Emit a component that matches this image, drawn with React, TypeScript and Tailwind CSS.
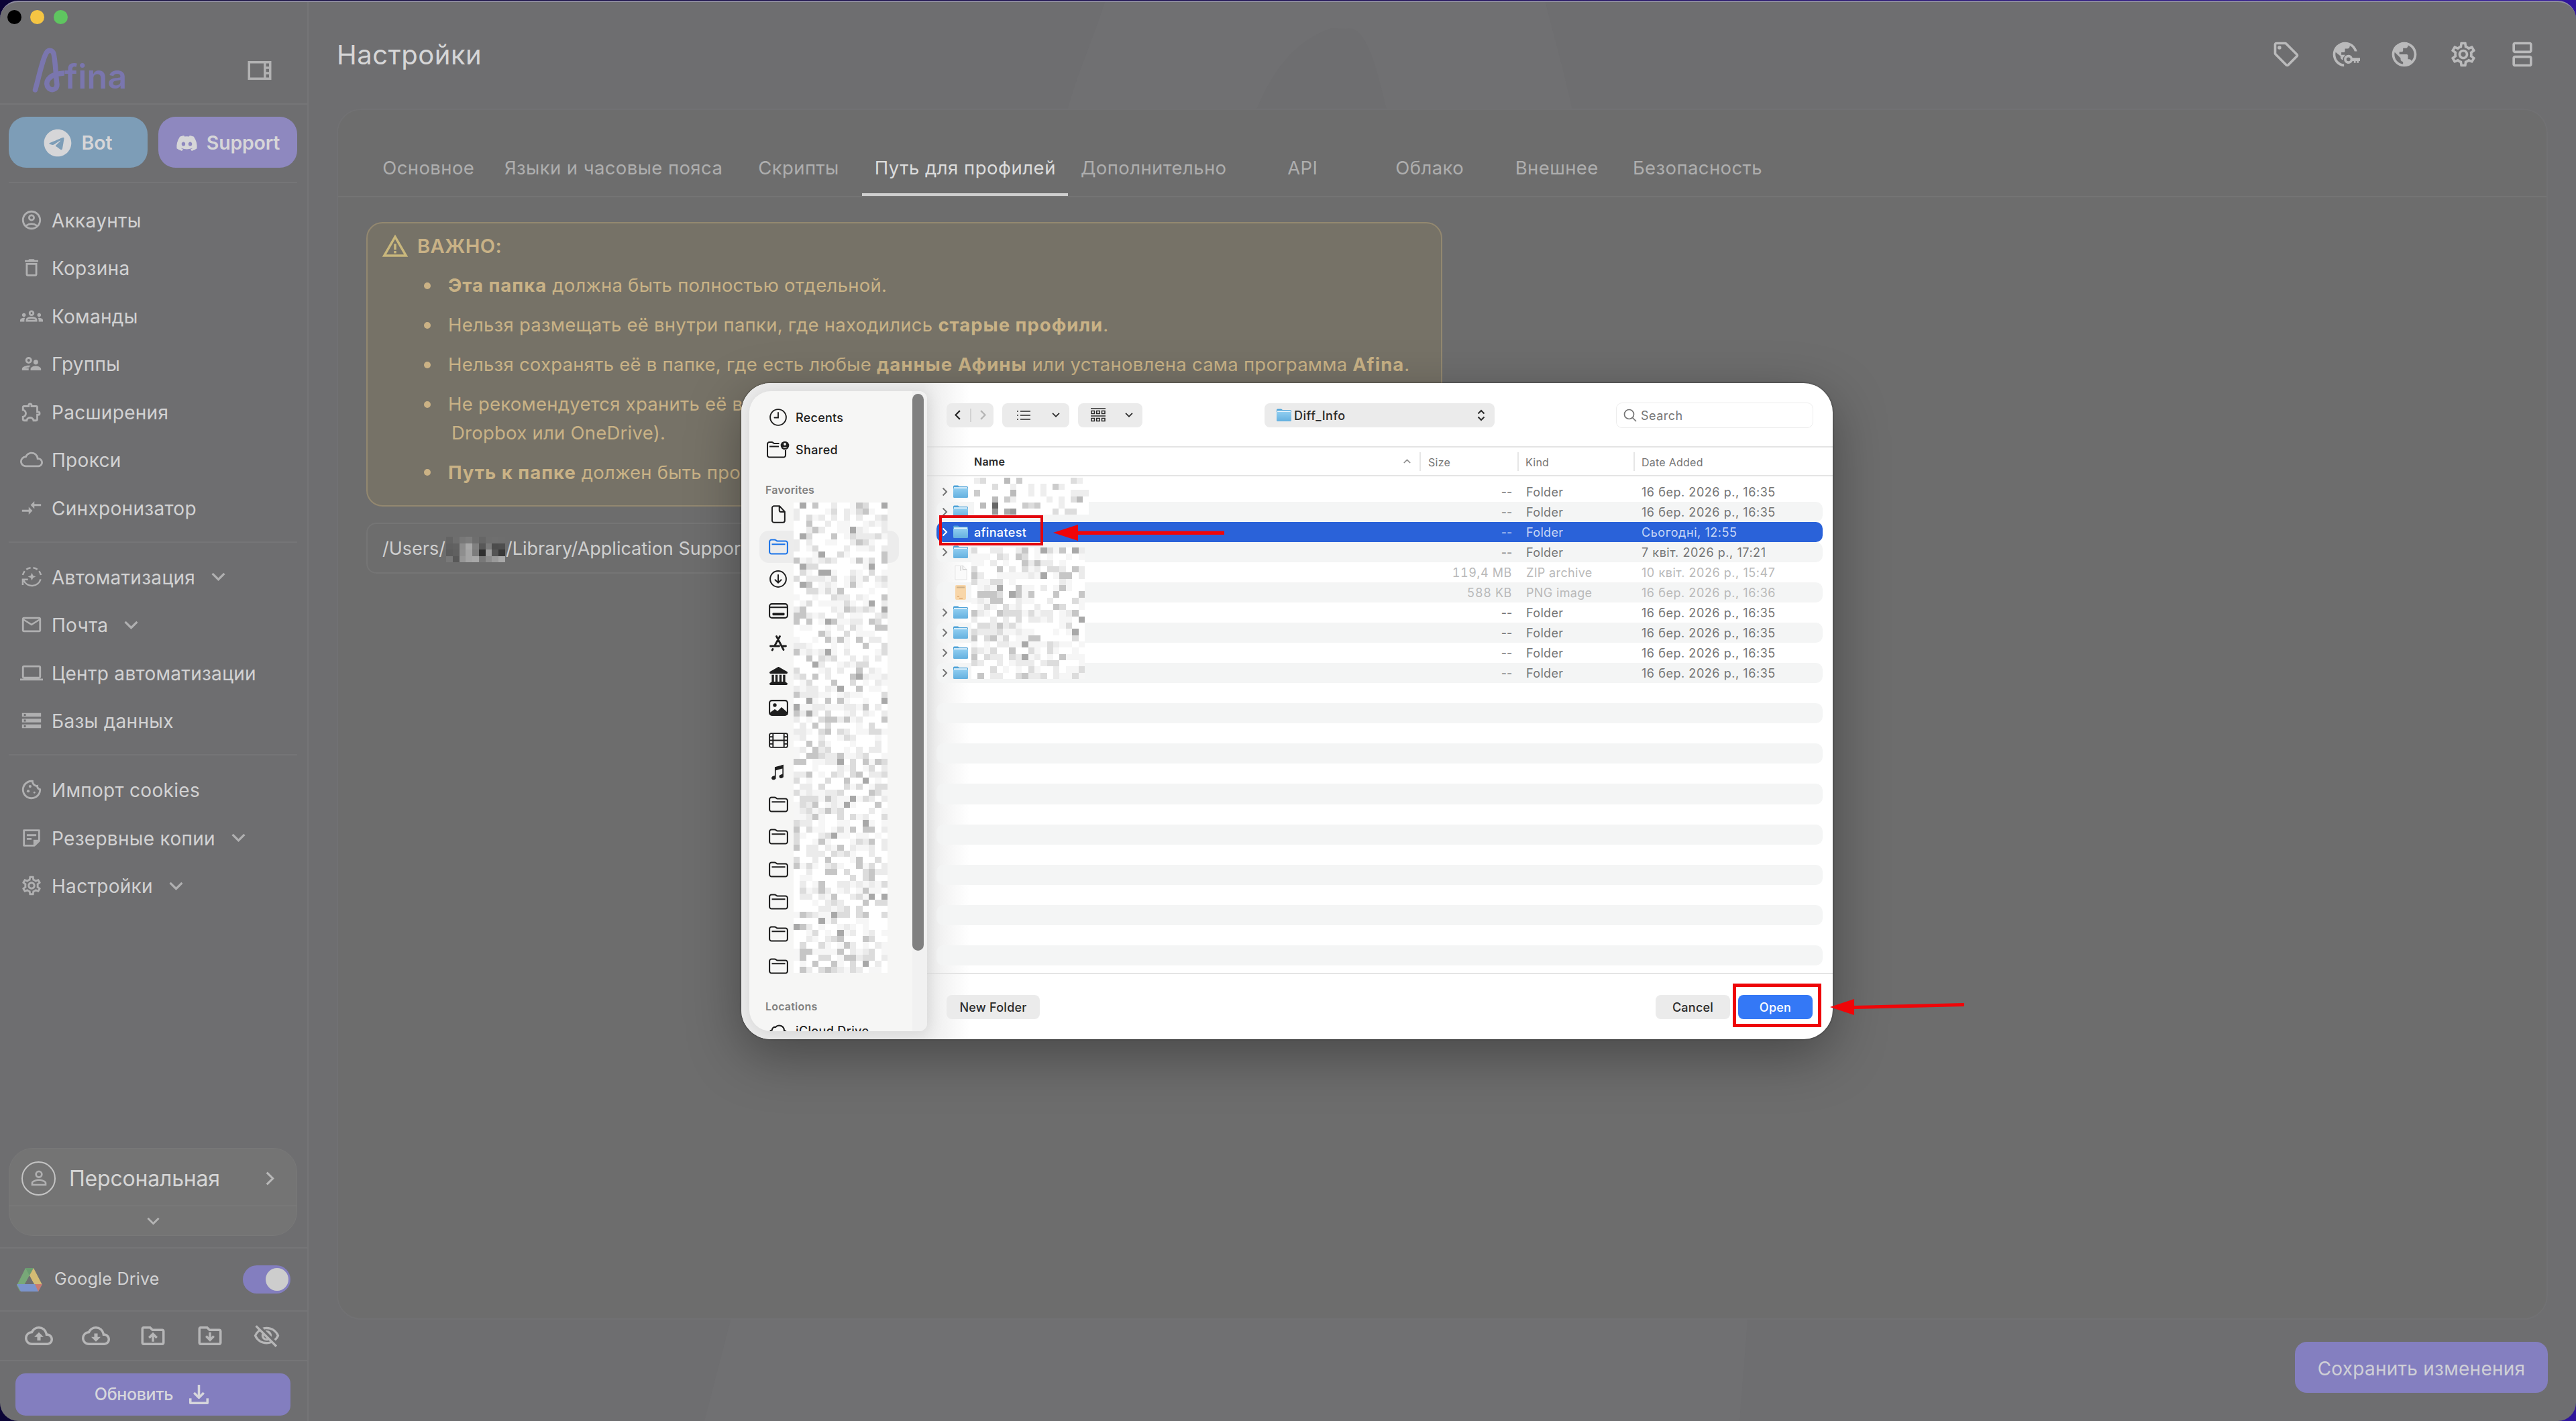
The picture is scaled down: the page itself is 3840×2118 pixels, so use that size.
import type { ReactNode } from 'react';
import type { IconType } from 'react-icons';
import {
  MdOutlineAccountCircle, MdDeleteOutline, MdOutlineGroups, MdOutlineSupervisorAccount, MdOutlineExtension,
  MdOutlineCloudQueue, MdOutlineCompareArrows, MdMailOutline, MdOutlineLaptop, MdStorage, MdOutlineCookie,
  MdOutlineSettings, MdOutlineViewSidebar, MdOutlineSell, MdPublic, MdOutlineSplitscreen, MdOutlineCloudUpload,
  MdOutlineCloudDownload, MdOutlineDriveFolderUpload, MdOutlineVisibilityOff, MdWarningAmber, MdPersonOutline,
} from 'react-icons/md';
import { FaTelegram, FaDiscord, FaLandmark } from 'react-icons/fa6';
import { IoMusicalNotesSharp } from 'react-icons/io5';

type SvgProps = { className?: string };

const Chevron = ({ className = '' }: SvgProps) => (
  <svg viewBox="0 0 20 12" className={className} fill="none" stroke="currentColor" strokeWidth="3">
    <path d="M1.5 1.5 10 10l8.500-8.500" />
  </svg>
);

const AutomationIcon = ({ className = '' }: SvgProps) => (
  <svg viewBox="0 0 32 32" className={className} fill="none" stroke="currentColor" strokeWidth="2.600">
    <path d="M2 13.500A14 14 0 0 1 5 7.500M7.500 5A14 14 0 0 1 14 2.200M18 2.200A14 14 0 0 1 24.500 5M27 7.500A14 14 0 0 1 30 13.500" />
    <path d="M29.500 20A14 14 0 0 1 3.500 22M2 29v-8.500h8" />
    <path d="M16 10l1.800 4.200L22 16l-4.200 1.800L16 22l-1.800-4.200L10 16l4.200-1.800z" fill="currentColor" stroke="none" />
  </svg>
);

const BackupIcon = ({ className = '' }: SvgProps) => (
  <svg viewBox="0 0 24 24" className={className} fill="none" stroke="currentColor" strokeWidth="2">
    <path d="M4 4h16v11l-5 5H4z" strokeLinejoin="round" />
    <path d="M7 9h10M7 13h5" />
    <path d="M14 20v-6h6z" fill="currentColor" stroke="none" />
  </svg>
);

const GlobeKeyIcon = ({ className = '' }: SvgProps) => (
  <svg viewBox="0 0 24 24" className={className} fill="currentColor">
    <path d="M11 22C5.900 21.500 2 17.200 2 12 2 6.480 6.480 2 12 2c4.600 0 8.500 3.100 9.650 7.500h-2.100C18.900 7.500 17.500 5.800 15.700 4.900c0 1.600-.7 2.500-1.900 2.500h-2v2c0 .55-.45 1-1 1h-2v2h3.200l-1.800 2.500v1.600c-1.100 0-2-.9-2-2v-1L4.210 10.210C4.080 10.790 4 11.380 4 12c0 4.080 3 7.440 7 7.930z" />
    <path d="M14.600 12.400a3.600 3.600 0 1 0 3.300 5h1.100v1.600h1.500v-1.600h.9v1.600h1.500v-1.600h1.100v-2.600h-6.100a3.600 3.600 0 0 0-3.300-2.400zm0 2a1.600 1.600 0 1 1 0 3.200 1.600 1.600 0 0 1 0-3.200z" />
  </svg>
);

const FolderDownIcon = ({ className = '' }: SvgProps) => (
  <svg viewBox="0 0 24 24" className={className} fill="currentColor">
    <path d="M20 6h-8l-2-2H4c-1.100 0-1.990.9-1.990 2L2 18c0 1.100.9 2 2 2h16c1.100 0 2-.9 2-2V8c0-1.100-.9-2-2-2zm0 12H4V6h5.170l2 2H20v10zM11 9v4.180l-1.590-1.590L8 13l4 4 4-4-1.410-1.410L13 13.180V9z" />
  </svg>
);

const navGroups: { icon: IconType | typeof AutomationIcon; label: string; more?: boolean; size?: string }[][] = [
  [
    { icon: MdOutlineAccountCircle, label: 'Аккаунты' },
    { icon: MdDeleteOutline, label: 'Корзина' },
    { icon: MdOutlineGroups, label: 'Команды' },
    { icon: MdOutlineSupervisorAccount, label: 'Группы' },
    { icon: MdOutlineExtension, label: 'Расширения' },
    { icon: MdOutlineCloudQueue, label: 'Прокси' },
    { icon: MdOutlineCompareArrows, label: 'Синхронизатор' },
  ],
  [
    { icon: AutomationIcon, label: 'Автоматизация', more: true, size: 'size-[31px]' },
    { icon: MdMailOutline, label: 'Почта', more: true },
    { icon: MdOutlineLaptop, label: 'Центр автоматизации' },
    { icon: MdStorage, label: 'Базы данных' },
  ],
  [
    { icon: MdOutlineCookie, label: 'Импорт cookies' },
    { icon: BackupIcon, label: 'Резервные копии', more: true },
    { icon: MdOutlineSettings, label: 'Настройки', more: true },
  ],
];

const tabs = ['Основное', 'Языки и часовые пояса', 'Скрипты', 'Путь для профилей', 'Дополнительно', 'API', 'Облако', 'Внешнее', 'Безопасность'];

const files = [
  { icon: 'folder', size: '--', kind: 'Folder', date: '16 бер. 2026 р., 16:35' },
  { icon: 'folder', size: '--', kind: 'Folder', date: '16 бер. 2026 р., 16:35' },
  { icon: 'folder', name: 'afinatest', size: '--', kind: 'Folder', date: 'Сьогодні, 12:55' },
  { icon: 'folder', size: '--', kind: 'Folder', date: '7 квіт. 2026 р., 17:21' },
  { icon: 'zip', size: '119,4 MB', kind: 'ZIP archive', date: '10 квіт. 2026 р., 15:47' },
  { icon: 'png', size: '588 KB', kind: 'PNG image', date: '16 бер. 2026 р., 16:36' },
  { icon: 'folder', size: '--', kind: 'Folder', date: '16 бер. 2026 р., 16:35' },
  { icon: 'folder', size: '--', kind: 'Folder', date: '16 бер. 2026 р., 16:35' },
  { icon: 'folder', size: '--', kind: 'Folder', date: '16 бер. 2026 р., 16:35' },
  { icon: 'folder', size: '--', kind: 'Folder', date: '16 бер. 2026 р., 16:35' },
];

const topNameCells = ['edfffbfcffffffffdef', 'fffdffeffefefceffff', 'cfffffbffefeffffeee', 'fffbfcefffffefefdbf', 'fbf6ffffcdcfffeffff', 'fff9fa9ffffffdfddff'];
const pathCells = ['#646464', '#6e6e6e', '#787878', '#7c7c7c', '#6e6e6e', '#666666', '#6e6e6e', '#6f6f6f', '#6e6e6e',
  '#606060', '#626262', '#8c8c8c', '#a8a8a8', '#808080', '#585858', '#7a7a7a', '#4c4c4c', '#4e4e4e',
  '#5c5c5c', '#606060', '#8e8e8e', '#a4a4a4', '#7c7c7c', '#303030', '#9c9c9c', '#545454', '#383838',
  '#787878', '#585858', '#969696', '#a4a4a4', '#a8a8a8', '#787878', '#8c8c8c', '#9a9a9a', '#a8a8a8'];

// stable pseudo-random greys so hidden names always blur the same way
const noise = (count: number, seed: number) => {
  let s = seed;
  return Array.from({ length: count }, () => {
    s = (s * 1103515245 + 12345) % 2147483648;
    const r = s / 2147483648;
    const v = r < 0.42 ? 255 : r < 0.62 ? 246 : r < 0.78 ? 235 : r < 0.9 ? 220 : r < 0.97 ? 198 : 168;
    return `rgb(${v},${v},${v})`;
  });
};

const sidebarNoise = noise(15 * 77, 41);
const listNoise = noise(18 * 21, 97);
const topNoise = topNameCells.join('').split('').map((c) => `#${c}${c}${c}`);

function Mosaic({ cells, cols, className }: { cells: string[]; cols: number; className: string }) {
  return (
    <svg className={className} viewBox={`0 0 ${cols} ${cells.length / cols}`} preserveAspectRatio="none" shapeRendering="crispEdges">
      {cells.map((fill, i) => <rect key={i} x={i % cols} y={Math.floor(i / cols)} width="1" height="1" fill={fill} />)}
    </svg>
  );
}

function Logo() {
  return (
    <div className="flex items-end h-[68px] text-[#7a76ae]">
      <svg viewBox="0 0 48 68" className="w-[48px] h-[68px]" fill="none" stroke="currentColor" strokeWidth="7.500" strokeLinecap="round" strokeLinejoin="round">
        <path d="M4.500 63C10 44 15 18 21 8c3-5 9-5 11 1 3 14 3 32 5 46 0 6-5 9-10 7-6-3-7-11-2-16 5-6 13-7 22-8" />
      </svg>
      <span className="text-[50px] leading-[50px] font-semibold tracking-[0.4px]">fina</span>
    </div>
  );
}

function Sidebar() {
  return (
    <aside className="w-[460px] shrink-0 h-full flex flex-col border-r-2 border-[#757577]">
      <div className="h-[156px] border-b-2 border-[#757577] shrink-0">
        <div className="flex gap-[13.5px] pl-[10.5px] pt-[14.5px]">
          <span className="size-[21px] rounded-full bg-black" />
          <span className="size-[21px] rounded-full bg-[#f5c543]" />
          <span className="size-[21px] rounded-full bg-[#5fc560]" />
        </div>
        <div className="flex justify-between items-center pl-[48px] pr-[50px] pt-[35px]">
          <Logo />
          <MdOutlineViewSidebar className="size-[42px] text-[#b2b2b3]" />
        </div>
      </div>

      <div className="flex gap-4 px-[13px] pt-[18px] pb-[21px] text-[#d6d6d8] text-[28.5px] font-semibold">
        <button className="w-[207px] h-[76px] pt-[2px] rounded-[26px] bg-[#7d9db7] flex items-center justify-center gap-[14px]">
          <FaTelegram className="size-[42px]" />Bot
        </button>
        <button className="w-[207px] h-[76px] pt-[2px] rounded-[26px] bg-[#8e88bf] flex items-center justify-center gap-[13px] tracking-[-0.2px]">
          <FaDiscord className="size-[33px]" />Support
        </button>
      </div>

      <nav className="pl-[13px] pr-[15px]">
        {navGroups.map((group, g) => (
          <div key={g} className={`border-t-2 border-[#757577] ${g === 0 ? 'pt-[19px] pb-[14px]' : 'pt-[15.5px] pb-[14px]'}`}>
            {group.map(({ icon: Icon, label, more, size }) => (
              <div key={label} className="h-[71.5px] flex items-center pl-[17px] text-[#d2d2d3]">
                <span className="w-[34px] flex justify-center text-[#b0b0b1]"><Icon className={size ?? 'size-[34px]'} /></span>
                <span className="ml-[13px] mt-[2px] text-[28px] tracking-[0.3px] whitespace-nowrap">{label}</span>
                {more && <Chevron className="w-[21px] h-[13px] ml-[24px] text-[#b0b0b1]" />}
              </div>
            ))}
          </div>
        ))}
      </nav>

      <div className="mt-auto">
        <div className="ml-[13px] mr-[15px] h-[131px] rounded-[36px] bg-[#747474] border border-[#797979] overflow-hidden">
          <div className="h-[86px] flex items-center pl-[18px] pr-[29px] pt-[4px] border-b-2 border-[#787878]">
            <span className="size-[51px] rounded-full border-2 border-[#c4c4c4] flex items-center justify-center text-[#b0b0b1]"><MdPersonOutline className="size-[34px]" /></span>
            <span className="ml-[20px] mt-[2px] text-[32px] tracking-[-0.2px] text-[#d6d6d6]">Персональная</span>
            <Chevron className="w-[21px] h-[13px] ml-auto -rotate-90 text-[#b8b8b8]" />
          </div>
          <div className="h-[43px] flex items-center justify-center text-[#b4b4b4]"><Chevron className="w-[19px] h-[12px]" /></div>
        </div>

        <div className="mt-[17px] h-[94px] border-t-2 border-[#757577] flex items-center pl-[25px] pr-[25px]">
          <svg viewBox="0 0 38 35" className="w-[38px] h-[35px]">
            <path d="M13 0h12l-6 11-11 20-3 4-5-9z" fill="#78a878" />
            <path d="M13 0h12l-6 11z" fill="#6a9c70" />
            <path d="M25 0l13 25H26L19 11z" fill="#d4bb74" />
            <path d="M0 24h38l-6 11H6z" fill="#7b94cc" />
            <path d="M38 24H27l5 11z" fill="#c97b70" />
            <path d="M19 12l7 12H12z" fill="#6e6e70" />
          </svg>
          <span className="ml-[18px] text-[25px] tracking-[0.25px] text-[#d2d2d3]">Google Drive</span>
          <span className="ml-auto w-[71px] h-[42px] rounded-full bg-[#837ebf] flex items-center justify-end pr-[3px]"><i className="size-[34px] rounded-full bg-[#cdcdcd]" /></span>
        </div>

        <div className="h-[76px] border-y-2 border-[#757577] flex items-center justify-between pl-[37px] pr-[40px] text-[#b6b6b7]">
          <MdOutlineCloudUpload className="size-[42px]" />
          <MdOutlineCloudDownload className="size-[42px]" />
          <MdOutlineDriveFolderUpload className="size-[42px]" />
          <FolderDownIcon className="size-[42px]" />
          <MdOutlineVisibilityOff className="size-[41px]" />
        </div>

        <button className="mt-[18px] mb-[8px] mx-[23px] w-[410px] h-[63px] rounded-[15px] bg-[#837ebf] flex items-center justify-center gap-[24px] text-[25px] tracking-[-0.35px] font-medium text-[#d6d6dc] pr-[4px]">
          Обновить
          <svg viewBox="0 0 28 28" className="size-[29px]" fill="none" stroke="currentColor" strokeWidth="3.400" strokeLinejoin="round">
            <path d="M14 0v18M7 11.500l7 7 7-7M1.700 19.500v6.800h24.600v-6.800" />
          </svg>
        </button>
      </div>
    </aside>
  );
}

function Bullet({ children, className = 'h-[59px]' }: { children: ReactNode; className?: string }) {
  return (
    <li className={`flex items-center ${className}`}>
      <i className="size-[10px] rounded-full bg-[#cbb285] ml-[84px] mr-[26px] shrink-0" />
      <span className="mt-px">{children}</span>
    </li>
  );
}

const Strong = ({ children }: { children: ReactNode }) => <b className="tracking-[1px]">{children}</b>;

function SettingsPage() {
  return (
    <main className="flex-1 flex flex-col pl-[42px] pr-[42px]">
      <header className="h-[162px] flex items-start justify-between shrink-0">
        <h1 className="text-[40px] tracking-[0.5px] leading-[48px] mt-[58px] text-[#d6d6d7]">Настройки</h1>
        <div className="flex items-center mt-[59px] gap-[44px] pr-[16px] text-[#bababb]">
          <MdOutlineSell className="size-[44px]" />
          <GlobeKeyIcon className="size-[44px]" />
          <MdPublic className="size-[44px]" />
          <MdOutlineSettings className="size-[44px]" />
          <MdOutlineSplitscreen className="size-[44px]" />
        </div>
      </header>

      <section className="h-[1805px] rounded-[36px] border-2 border-[#717173] bg-[#6d6d6d] shrink-0">
        <div className="flex h-[130px] items-end border-b-2 border-[#747474] pl-[40px]">
          {tabs.map((tab) => {
            const active = tab === 'Путь для профилей';
            return (
              <button key={tab} className={`min-w-[189.5px] px-[18.5px] h-[86px] pt-[7px] text-[27.5px] whitespace-nowrap border-b-4 ${active ? 'text-[#dcdcdc] border-[#d0d0d0] tracking-[0.5px]' : 'text-[#aeaeae] border-transparent tracking-[0.4px]'}`}>{tab}</button>
            );
          })}
        </div>

        <div className="ml-[42px] mt-[37px] w-[1604px] h-[424px] rounded-[24px] border-2 border-[#938870] bg-[#767267] text-[#c9b286] text-[27.5px] tracking-[0.24px]">
          <div className="flex items-center h-[67px] pl-[20px] gap-[12px]">
            <MdWarningAmber className="size-[42px] text-[#c9b77c]" />
            <b className="font-semibold text-[29px] tracking-[0.5px] mt-[1px]">ВАЖНО:</b>
          </div>
          <ul className="-mt-[4px] whitespace-nowrap">
            <Bullet><Strong>Эта папка</Strong> должна быть полностью отдельной.</Bullet>
            <Bullet>Нельзя размещать её внутри папки, где находились <Strong>старые профили</Strong>.</Bullet>
            <Bullet>Нельзя сохранять её в папке, где есть любые <Strong>данные Афины</Strong> или установлена сама программа <Strong>Afina</Strong>.</Bullet>
            <Bullet>Не рекомендуется хранить её в</Bullet>
            <li className="h-[43px] -mt-[8px] ml-[125px] flex items-center">Dropbox или OneDrive).</li>
            <Bullet className="h-[74px]"><Strong>Путь к папке</Strong> должен быть про</Bullet>
          </ul>
        </div>

        <div className="ml-[42px] mt-[24px] w-[1604px] h-[76px] pt-[3px] rounded-[15px] border-2 border-[#757575] flex items-center pl-[22px] text-[27px] text-[#cfcfcf]">
          /Users/
          <Mosaic cells={pathCells} cols={9} className="w-[88px] h-[38px] mx-[1px]" />
          /Library/Application Suppor
        </div>
      </section>

      <button className="mt-[33px] self-end w-[377px] h-[76px] pt-[3px] rounded-[18px] bg-[#847fc0] text-[#cfcfd6] text-[28px] tracking-[0.25px]">Сохранить изменения</button>
    </main>
  );
}

/* ---------- macOS open dialog ---------- */

const FolderLine = ({ className = '' }: SvgProps) => (
  <svg viewBox="0 0 29 24" className={className} fill="none" stroke="currentColor" strokeWidth="2.100" strokeLinejoin="round">
    <path d="M1.100 19.500v-15a3 3 0 0 1 3-3h4.400c2.500 0 2.500 2 4.500 2h11.900a3 3 0 0 1 3 3v13a3 3 0 0 1-3 3H4.100a3 3 0 0 1-3-3zM4.500 8.200h20" />
  </svg>
);

const favorites: ReactNode[] = [
  <svg viewBox="0 0 22 28" className="w-[21px] h-[27px]" fill="none" stroke="currentColor" strokeWidth="2.100" strokeLinejoin="round"><path d="M4 1.200h8.500L20.800 10v13.800a3 3 0 0 1-3 3H4a3 3 0 0 1-3-3V4.200a3 3 0 0 1 3-3zM12.300 1.500v6.500a2.200 2.200 0 0 0 2.200 2.200h6" /></svg>,
  <FolderLine className="w-[29px] h-[24px] text-[#1c74e8]" />,
  <svg viewBox="0 0 26 26" className="size-[26px]" fill="none" stroke="currentColor" strokeWidth="2" strokeLinecap="round"><circle cx="13" cy="13" r="11.900" /><path d="M13 7v11.500M8.500 14.200l4.500 4.500 4.500-4.500" /></svg>,
  <svg viewBox="0 0 29 23" className="w-[29px] h-[23px]" fill="none" stroke="currentColor" strokeWidth="2.100"><rect x="1.100" y="1.100" width="26.800" height="20.800" rx="3.500" /><path d="M1 6.200h27" /><rect x="5.500" y="14.500" width="18" height="3.800" rx="1" fill="currentColor" stroke="none" /></svg>,
  <svg viewBox="0 0 26 24" className="w-[26px] h-[24px]" fill="none" stroke="currentColor" strokeWidth="2.800" strokeLinecap="round"><path d="M10.500 1.500l10.500 20M15.500 1.500L7.500 16M1.500 16h13M20 16h4.500M5 20.500l-.8 1.500" /></svg>,
  <FaLandmark className="size-[27px]" />,
  <svg viewBox="0 0 29 24" className="w-[29px] h-[24px]" fill="none" stroke="currentColor" strokeWidth="2.100"><rect x="1.100" y="1.100" width="26.800" height="21.800" rx="3.500" /><circle cx="9" cy="8" r="2.700" fill="currentColor" stroke="none" /><path d="M2 19l7-5 4 3 6-6 9 8v4H2z" fill="currentColor" stroke="none" /></svg>,
  <svg viewBox="0 0 29 23" className="w-[29px] h-[23px]" fill="none" stroke="currentColor" strokeWidth="1.900"><rect x="1.100" y="1.100" width="26.800" height="20.800" rx="2.500" /><path d="M6.300 1v21M22.700 1v21M6.300 11.500h16.400M1 6.200h5.300M1 11.500h5.300M1 16.700h5.300M22.700 6.200H28M22.700 11.500H28M22.700 16.700H28" /></svg>,
  <IoMusicalNotesSharp className="size-[26px] mr-[3px]" />,
];

const FolderBlue = () => (
  <svg viewBox="0 0 22 20" className="w-[22px] h-[20px]">
    <defs>
      <linearGradient id="folderFront" x1="0" y1="0" x2="0" y2="1">
        <stop offset="0" stopColor="#8fcdf0" />
        <stop offset="1" stopColor="#64b0df" />
      </linearGradient>
    </defs>
    <path d="M0 2a1.500 1.500 0 0 1 1.500-1.500h5.500l2 1.500h11.500A1.500 1.500 0 0 1 22 3.500V8H0z" fill="#4fa3d8" />
    <rect x="1" y="3.200" width="20" height="3" fill="#e6f4fc" />
    <path d="M0 5h22v12.500a1.500 1.500 0 0 1-1.500 1.500h-19A1.500 1.500 0 0 1 0 17.500z" fill="url(#folderFront)" />
  </svg>
);

function FileIcon({ kind }: { kind: string }) {
  if (kind === 'folder') return <FolderBlue />;
  if (kind === 'zip') {
    return (
      <svg viewBox="0 0 20 24" className="w-[19px] h-[23px]">
        <path d="M1 1h12l6 6v16H1z" fill="#fafafa" stroke="#e4e4e4" />
        <path d="M13 1v6h6M9.500 2v7" fill="none" stroke="#cfcfcf" strokeWidth="1.400" />
      </svg>
    );
  }
  return (
    <svg viewBox="0 0 16 22" className="w-[16px] h-[22px]">
      <rect width="16" height="22" rx="2" fill="#f8d6a8" />
      <path d="M2 3.500h12" stroke="#cdb088" strokeWidth="2.200" />
      <path d="M3 17h3M6 20h5" stroke="#e0a970" strokeWidth="1.600" />
    </svg>
  );
}

function DialogSidebar() {
  return (
    <div className="absolute left-[12px] top-[12px] w-[265px] h-[954px] rounded-[32px] rounded-r-[12px] overflow-hidden bg-[#f6f6f5] flex text-[18px] text-[#1e1e1e] font-medium shadow-[2px_2px_24px_rgba(0,0,0,0.10)]">
      <div className="flex-1">
        <div className="h-[48px] mt-[15px] flex items-center">
          <span className="w-[86px] shrink-0 flex justify-center">
            <svg viewBox="0 0 26 26" className="size-[26px]" fill="none" stroke="currentColor" strokeWidth="1.900" strokeLinecap="round"><circle cx="13" cy="13" r="11.900" /><path d="M13 6v7.500H7.500" /></svg>
          </span>
          <span className="-ml-[17px] mt-px tracking-[0.25px]">Recents</span>
        </div>
        <div className="h-[48px] flex items-center">
          <span className="w-[86px] shrink-0 flex justify-center">
            <svg viewBox="0 0 34 26" className="w-[34px] h-[26px]" fill="none" stroke="currentColor" strokeWidth="2.100">
              <path d="M28 14v7.500a3 3 0 0 1-3 3H4a3 3 0 0 1-3-3V5a3 3 0 0 1 3-3h3.500c2 0 2 2 4 2h7M4 8.500h14" />
              <circle cx="27" cy="7" r="6.300" fill="currentColor" stroke="none" />
              <circle cx="27" cy="5" r="1.900" fill="#f6f6f5" stroke="none" />
              <path d="M23.500 10.500a4 3 0 0 1 7 0z" fill="#f6f6f5" stroke="none" />
            </svg>
          </span>
          <span className="-ml-[17px] mt-px tracking-[0.35px]">Shared</span>
        </div>
        <div className="mt-[24px] h-[24px] flex items-center pl-[24px] text-[16px] font-semibold text-[#808080] tracking-[0.2px]">Favorites</div>

        <div className="relative pt-[0.500px]">
          {Array.from({ length: 15 }, (_, i) => (
            <div key={i} className={`h-[48.100px] ml-[15px] mr-[20px] w-[208px] rounded-[14px] flex items-center ${i === 1 ? 'bg-[#ececec]' : ''}`}>
              <span className="w-[56px] flex justify-center">{favorites[i] ?? <FolderLine className="w-[29px] h-[24px]" />}</span>
            </div>
          ))}
          <Mosaic cells={sidebarNoise} cols={15} className="absolute left-[66px] top-[7px] w-[140px] h-[701px]" />
        </div>

        <div className="mt-[24px] h-[24px] flex items-center pl-[24px] text-[16px] font-semibold text-[#808080] tracking-[0.2px]">Locations</div>
        <div className="h-[48px] flex items-center mt-[1px]">
          <span className="w-[86px] shrink-0 flex justify-center">
            <svg viewBox="0 0 30 22" className="w-[30px] h-[22px]" fill="none" stroke="currentColor" strokeWidth="2.100"><path d="M7 20.500a6 6 0 0 1-1-11.500 4 4 0 0 1 5-4 7.500 7.500 0 0 1 13 5 5.500 5.500 0 0 1 0 10.500z" /></svg>
          </span>
          <span className="-ml-[17px] tracking-[0.35px]">iCloud Drive</span>
        </div>
      </div>
      <div className="w-[22px] bg-[#f1f1f1] pr-[5px] pt-[4px]"><div className="h-[830px] w-[17px] rounded-full bg-[#808080]" /></div>
    </div>
  );
}

function Toolbar() {
  return (
    <div className="h-[96px] border-b-2 border-[#e4e4e4] pt-[29.5px] flex text-[#2a2a2a]">
      <div className="ml-[30px] w-[70px] h-[36px] rounded-[8px] bg-[#ebebeb] flex items-center">
        <Chevron className="w-[17px] h-[9px] rotate-90 ml-[8px]" />
        <i className="w-[1.500px] h-[20px] bg-[#d2d2d2] ml-[10px]" />
        <Chevron className="w-[17px] h-[9px] -rotate-90 ml-[9px] text-[#b4b4b4]" />
      </div>
      <div className="ml-[13px] w-[100px] h-[36px] rounded-[8px] bg-[#ebebeb] flex items-center">
        <svg viewBox="0 0 20 16" className="w-[20px] h-[16px] ml-[22px]" stroke="currentColor" strokeWidth="1.600"><path d="M5 2h15M5 8h15M5 14h15M0 2h2M0 8h2M0 14h2" /></svg>
        <Chevron className="w-[12px] h-[7px] ml-[32px]" />
      </div>
      <div className="ml-[13px] w-[96px] h-[36px] rounded-[8px] bg-[#ebebeb] flex items-center">
        <svg viewBox="0 0 22 21" className="w-[22px] h-[21px] ml-[19px]" fill="none" stroke="currentColor" strokeWidth="1.500">
          <path d="M0 1h22M0 12h22" />
          <path d="M1 4.500h4.500v4H1zM8.700 4.500h4.500v4H8.700zM16.500 4.500H21v4h-4.500zM1 15.500h4.500v4H1zM8.700 15.500h4.500v4H8.700zM16.500 15.500H21v4h-4.500z" />
        </svg>
        <Chevron className="w-[12px] h-[7px] ml-[29px]" />
      </div>
      <div className="ml-[182px] w-[343px] h-[36px] rounded-[8px] bg-[#ebebeb] flex items-center pl-[18px] pr-[14px] text-[18px] font-medium">
        <FolderBlue /><span className="ml-[4px] mt-[2px] tracking-[0.5px]">Diff_Info</span>
        <svg viewBox="0 0 12 18" className="w-[12px] h-[18px] ml-auto" fill="none" stroke="currentColor" strokeWidth="2"><path d="M1.500 6.500L6 2l4.500 4.500M1.500 11.500L6 16l4.500-4.500" /></svg>
      </div>
      <div className="ml-[181px] -mt-[1px] w-[294px] h-[38px] rounded-[9px] border border-[#ececec] flex items-center pl-[10px] text-[18px] text-[#757575]">
        <svg viewBox="0 0 20 20" className="size-[20px]" fill="none" stroke="currentColor" strokeWidth="1.700"><circle cx="8.500" cy="8.500" r="7" /><path d="M13.500 13.500l5.500 5.500" /></svg>
        <span className="ml-[6px] mt-[2px] tracking-[0.5px]">Search</span>
      </div>
    </div>
  );
}

function FileList() {
  return (
    <div className="relative">
      <div className="h-[43px] border-b-2 border-[#e4e4e4] flex items-center text-[16px] tracking-[0.25px] text-[#757575]">
        <span className="w-[716px] pl-[71px] pt-[1px] font-semibold text-[#2a2a2a]">Name</span>
        <Chevron className="w-[11px] h-[7px] rotate-180 -ml-[5px] mr-[13px] text-[#8a8a8a]" />
        <span className="w-[146px] h-[28px] pl-[11px] pt-[3px] border-l-2 border-[#e6e6e6]">Size</span>
        <span className="w-[173px] h-[28px] pl-[10px] pt-[3px] border-l-2 border-[#e6e6e6]">Kind</span>
        <span className="h-[28px] pl-[10px] pt-[3px] border-l-2 border-[#e6e6e6]">Date Added</span>
      </div>
      <div className="pt-2 pl-[15px]">
        {Array.from({ length: 24 }, (_, i) => {
          const f = files[i];
          const selected = i === 2;
          const dim = i === 4 || i === 5;
          const tone = selected ? 'bg-[#2a62d9] text-[#c9d8f6]' : `${i % 2 ? 'bg-[#f4f5f5]' : ''} ${dim ? 'text-[#b9b9b9]' : 'text-[#757575]'}`;
          return (
            <div key={i} className={`w-[1321px] h-[30.040px] rounded-[10px] flex items-center text-[18px] ${tone}`}>
              {f && (
                <>
                  <span className="w-[25px] flex justify-center">{f.icon === 'folder' && <Chevron className={`w-[13px] h-[8px] -rotate-90 ${selected ? 'text-white' : 'text-[#757575]'}`} />}</span>
                  <span className="w-[22px] flex justify-center"><FileIcon kind={f.icon} /></span>
                  <span className="ml-[9px] mt-[1px] w-[560px] text-white font-medium text-[18px] tracking-[0.35px]">{f.name}</span>
                  <span className={`mt-[1px] w-[242px] text-right ${dim ? 'tabular-nums tracking-[0.6px]' : '-tracking-[0.2px]'}`}>{f.size}</span>
                  <span className="mt-[1px] ml-[21px] w-[172px] tracking-[0.35px]">{f.kind}</span>
                  <span className="mt-[1px] whitespace-nowrap tracking-[0.55px]">{f.date}</span>
                </>
              )}
            </div>
          );
        })}
      </div>
      <Mosaic cells={topNoise} cols={19} className="absolute left-[71px] top-[45px] w-[171px] h-[55px]" />
      <Mosaic cells={listNoise} cols={18} className="absolute left-[67px] top-[149px] w-[169px] h-[196px]" />
    </div>
  );
}

function OpenDialog() {
  return (
    <div className="absolute left-[1105px] top-[571px] w-[1627px] h-[978px] rounded-[44px] overflow-hidden bg-white">
      <div className="absolute inset-y-0 left-0 w-[340px] bg-linear-to-r from-[#ebebeb] from-80% to-white" />
      <div className="absolute inset-y-0 left-[276px] right-0">
        <Toolbar />
        <FileList />
        <div className="mt-[11.5px] border-t-2 border-[#e4e4e4] pt-[31px] flex text-[18px] font-medium text-[#2a2a2a]">
          <button className="ml-[30px] w-[139px] h-[36px] rounded-[8px] bg-[#ebebeb] tracking-[0.25px]">New Folder</button>
          <button className="ml-[918px] w-[111px] h-[36px] rounded-[8px] bg-[#ebebeb] tracking-[0.25px]">Cancel</button>
          <button className="ml-[12px] w-[111px] h-[36px] rounded-[8px] bg-[#3478f6] text-white tracking-[0.25px]">Open</button>
        </div>
      </div>
      <DialogSidebar />
    </div>
  );
}

export default function App() {
  return (
    <div className="relative w-[3840px] h-[2118px] bg-linear-to-r from-[#0b0436] via-[#12034c] to-[#2f159c] overflow-hidden font-['Inter','Liberation_Sans',sans-serif]">
      <div className="absolute inset-x-0 top-[1px] bottom-0 rounded-[27px] bg-[#6e6e70] border-t-2 border-[#8f8da0] overflow-hidden">
        <svg viewBox="0 0 3840 2118" className="absolute left-0 -top-[3px] w-[3840px] h-[2118px]" fill="#707072">
          <path d="M1648 0h655c12 50 30 110 42 170l260 1800-12 148H1050l130-500 410-1450c16-60 40-110 58-168zM1985 42c-60 20-90 70-112 121h194c-12-50-30-130-60-120z" fillRule="evenodd" />
        </svg>
        <div className="relative flex h-[2118px] -mt-[3px]">
          <Sidebar />
          <SettingsPage />
        </div>
      </div>

      <div className="absolute left-[1105px] top-[571px] w-[1627px] h-[978px] rounded-[44px] shadow-[0_24px_80px_rgba(0,0,0,0.34),0_0_2px_1px_rgba(0,0,0,0.25)]" />
      <OpenDialog />

      {/* callouts */}
      <div className="absolute left-[1400px] top-[768px] w-[155px] h-[45px] border-4 border-[#e3050d]" />
      <div className="absolute left-[2583px] top-[1466px] w-[132px] h-[65px] border-[5px] border-[#ee0508]" />
      <svg className="absolute left-[1570px] top-[780px] w-[260px] h-[28px]" viewBox="0 0 260 28" fill="#f00508">
        <path d="M0 14L37 2v24z" />
        <rect x="36" y="11.500" width="219" height="5.500" />
      </svg>
      <svg className="absolute left-[2728px] top-[1485px] w-[204px] h-[32px]" viewBox="0 0 204 32" fill="#f00508">
        <path d="M0 16L36 4v24z" />
        <path d="M35 14l165-4v5L35 19z" />
      </svg>
    </div>
  );
}
